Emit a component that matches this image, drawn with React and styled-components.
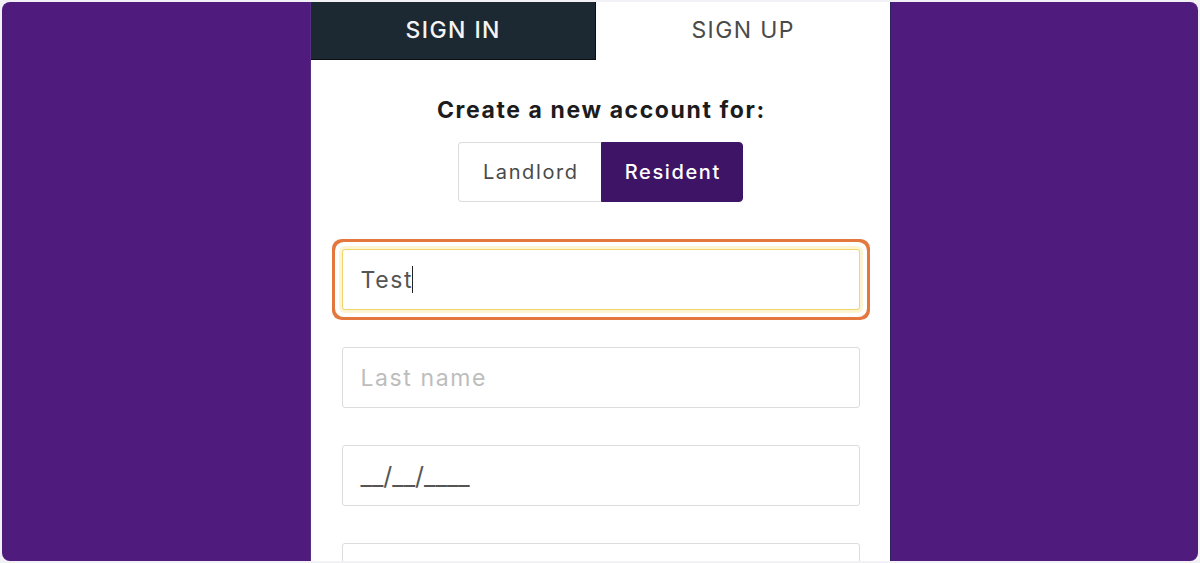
import React from "react";
import styled, { createGlobalStyle } from "styled-components";

const Global = createGlobalStyle`
  html, body { margin: 0; padding: 0; height: 100%; overflow: hidden; background: #f1f1f6; }
  #root { height: 100%; }
  * { box-sizing: border-box; }
`;

const Frame = styled.div`
  margin: 2px;
  height: 559px;
  background: #4f1c7e;
  border-radius: 8px;
  overflow: hidden;
  display: flex;
  justify-content: center;
`;

const Panel = styled.div`
  width: 581px;
  background: #ffffff;
  border-left: 1px solid #5a2e86;
  border-right: 1px solid #2a2160;
  display: flex;
  flex-direction: column;
  font-family: Inter, "Noto Sans", sans-serif;
`;

const Tabs = styled.div`
  display: flex;
  height: 58px;
  flex-shrink: 0;
`;

const Tab = styled.div`
  flex: ${(p) => (p.$active ? "0 0 285px" : "1")};
  display: flex;
  align-items: center;
  justify-content: center;
  font-size: 23px;
  letter-spacing: 1.4px;
  text-indent: 1.4px;
  font-weight: ${(p) => (p.$active ? 500 : 400)};
  color: ${(p) => (p.$active ? "#f4f4f4" : "#4a4a4a")};
  background: ${(p) => (p.$active ? "#1d2932" : "#ffffff")};
  border-bottom: ${(p) => (p.$active ? "1px solid #0b0f12" : "none")};
  border-right: ${(p) => (p.$active ? "1px solid #0b0f12" : "none")};
  padding-bottom: 2px;
`;

const Body = styled.div`
  display: flex;
  flex-direction: column;
  align-items: center;
  padding: 36px 30px 0 31px;
`;

const Heading = styled.h2`
  margin: 0;
  font-size: 23px;
  font-weight: 700;
  color: #1c1c1c;
  letter-spacing: 1.6px;
  text-indent: 1.6px;
  line-height: 28px;
`;

const Segmented = styled.div`
  display: flex;
  margin-top: 18px;
  height: 60px;
`;

const SegButton = styled.div`
  width: ${(p) => (p.$active ? "142px" : "143px")};
  display: flex;
  align-items: center;
  justify-content: center;
  font-size: 20px;
  letter-spacing: 1.6px;
  text-indent: 1.6px;
  font-weight: ${(p) => (p.$active ? 500 : 400)};
  color: ${(p) => (p.$active ? "#ffffff" : "#4a4a4a")};
  background: ${(p) => (p.$active ? "#3e1566" : "#ffffff")};
  border: 1px solid ${(p) => (p.$active ? "#3e1566" : "#dcdcdc")};
  border-radius: ${(p) => (p.$left ? "4px 0 0 4px" : "0 4px 4px 0")};
  ${(p) => (p.$left ? "border-right: none;" : "")}
`;

const Fields = styled.div`
  width: 100%;
  display: flex;
  flex-direction: column;
  gap: 37px;
  margin-top: 47px;
`;

const Field = styled.div`
  height: 61px;
  border: 1px solid ${(p) => (p.$focused ? "#f0d56a" : "#dcdcdc")};
  border-radius: 3px;
  display: flex;
  align-items: center;
  padding: 0 18px;
  font-size: 23px;
  letter-spacing: 1.6px;
  color: ${(p) => (p.$placeholder ? "#bdbdbd" : "#555555")};
  box-shadow: ${(p) =>
    p.$focused
      ? "0 0 0 3px #fdf4d4, 0 0 0 7px #ffffff, 0 0 0 10px #e3773e"
      : "none"};
  flex-shrink: 0;
`;

const DateMask = styled.span`
  letter-spacing: 0;
  font-size: 25px;
`;

const Caret = styled.span`
  display: inline-block;
  width: 1px;
  height: 27px;
  background: #222;
  margin-left: -1px;
`;

export default function App() {
  return (
    <>
      <Global />
      <Frame>
        <Panel>
          <Tabs>
            <Tab $active>SIGN IN</Tab>
            <Tab>SIGN UP</Tab>
          </Tabs>
          <Body>
            <Heading>Create a new account for:</Heading>
            <Segmented>
              <SegButton $left>Landlord</SegButton>
              <SegButton $active>Resident</SegButton>
            </Segmented>
            <Fields>
              <Field $focused>
                Test
                <Caret />
              </Field>
              <Field $placeholder>Last name</Field>
              <Field>
                <DateMask>__/__/____</DateMask>
              </Field>
              <Field $placeholder></Field>
            </Fields>
          </Body>
        </Panel>
      </Frame>
    </>
  );
}
